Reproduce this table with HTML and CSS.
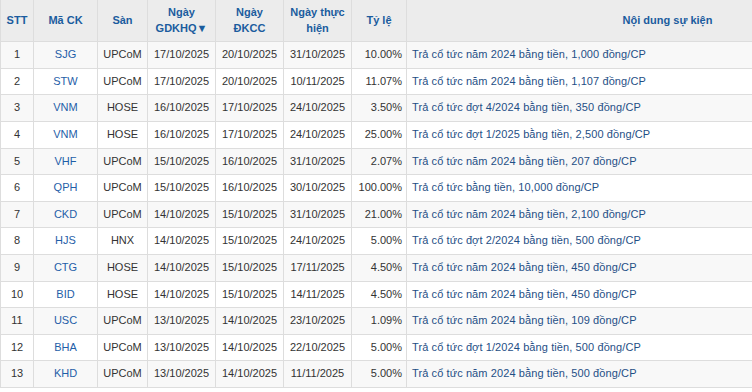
FILE: index.html
```html
<!DOCTYPE html>
<html lang="vi">
<head>
<meta charset="utf-8">
<title>Lịch sự kiện</title>
<link rel="stylesheet" href="styles.css">
</head>
<body>
<div class="wrap">
<table class="events">
  <colgroup>
    <col class="c-stt"><col class="c-ma"><col class="c-san"><col class="c-d1"><col class="c-d2"><col class="c-d3"><col class="c-tl"><col class="c-nd">
  </colgroup>
  <thead>
    <tr>
      <th>STT</th><th>Mã CK</th><th>Sàn</th><th>Ngày<br>GDKHQ<span class="arrow">▼</span></th><th>Ngày<br>ĐKCC</th><th>Ngày thực<br>hiện</th><th>Tỷ lệ</th><th>Nội dung sự kiện</th>
    </tr>
  </thead>
  <tbody>
    <tr><td>1</td><td class="code">SJG</td><td>UPCoM</td><td>17/10/2025</td><td>20/10/2025</td><td>31/10/2025</td><td class="num">10.00%</td><td class="desc">Trả cổ tức năm 2024 bằng tiền, 1,000 đồng/CP</td></tr>
    <tr><td>2</td><td class="code">STW</td><td>UPCoM</td><td>17/10/2025</td><td>20/10/2025</td><td>10/11/2025</td><td class="num">11.07%</td><td class="desc">Trả cổ tức năm 2024 bằng tiền, 1,107 đồng/CP</td></tr>
    <tr><td>3</td><td class="code">VNM</td><td>HOSE</td><td>16/10/2025</td><td>17/10/2025</td><td>24/10/2025</td><td class="num">3.50%</td><td class="desc">Trả cổ tức đợt 4/2024 bằng tiền, 350 đồng/CP</td></tr>
    <tr><td>4</td><td class="code">VNM</td><td>HOSE</td><td>16/10/2025</td><td>17/10/2025</td><td>24/10/2025</td><td class="num">25.00%</td><td class="desc">Trả cổ tức đợt 1/2025 bằng tiền, 2,500 đồng/CP</td></tr>
    <tr><td>5</td><td class="code">VHF</td><td>UPCoM</td><td>15/10/2025</td><td>16/10/2025</td><td>31/10/2025</td><td class="num">2.07%</td><td class="desc">Trả cổ tức năm 2024 bằng tiền, 207 đồng/CP</td></tr>
    <tr><td>6</td><td class="code">QPH</td><td>UPCoM</td><td>15/10/2025</td><td>16/10/2025</td><td>30/10/2025</td><td class="num">100.00%</td><td class="desc">Trả cổ tức bằng tiền, 10,000 đồng/CP</td></tr>
    <tr><td>7</td><td class="code">CKD</td><td>UPCoM</td><td>14/10/2025</td><td>15/10/2025</td><td>31/10/2025</td><td class="num">21.00%</td><td class="desc">Trả cổ tức năm 2024 bằng tiền, 2,100 đồng/CP</td></tr>
    <tr><td>8</td><td class="code">HJS</td><td>HNX</td><td>14/10/2025</td><td>15/10/2025</td><td>24/10/2025</td><td class="num">5.00%</td><td class="desc">Trả cổ tức đợt 2/2024 bằng tiền, 500 đồng/CP</td></tr>
    <tr><td>9</td><td class="code">CTG</td><td>HOSE</td><td>14/10/2025</td><td>15/10/2025</td><td>17/11/2025</td><td class="num">4.50%</td><td class="desc">Trả cổ tức năm 2024 bằng tiền, 450 đồng/CP</td></tr>
    <tr><td>10</td><td class="code">BID</td><td>HOSE</td><td>14/10/2025</td><td>15/10/2025</td><td>14/11/2025</td><td class="num">4.50%</td><td class="desc">Trả cổ tức năm 2024 bằng tiền, 450 đồng/CP</td></tr>
    <tr><td>11</td><td class="code">USC</td><td>UPCoM</td><td>13/10/2025</td><td>14/10/2025</td><td>23/10/2025</td><td class="num">1.09%</td><td class="desc">Trả cổ tức năm 2024 bằng tiền, 109 đồng/CP</td></tr>
    <tr><td>12</td><td class="code">BHA</td><td>UPCoM</td><td>13/10/2025</td><td>14/10/2025</td><td>22/10/2025</td><td class="num">5.00%</td><td class="desc">Trả cổ tức đợt 1/2024 bằng tiền, 500 đồng/CP</td></tr>
    <tr><td>13</td><td class="code">KHD</td><td>UPCoM</td><td>13/10/2025</td><td>14/10/2025</td><td>11/11/2025</td><td class="num">5.00%</td><td class="desc">Trả cổ tức năm 2024 bằng tiền, 500 đồng/CP</td></tr>
  </tbody>
</table>
</div>
</body>
</html>
```
FILE: styles.css
```css
html, body {
  margin: 0;
  padding: 0;
  background: #ffffff;
  overflow: hidden;
}
.wrap {
  width: 752px;
  overflow: hidden;
}
.events {
  border-collapse: collapse;
  table-layout: fixed;
  width: 928px;
  font-family: "Liberation Sans", Arial, sans-serif;
  font-size: 11px;
  color: #333333;
}
.c-stt { width: 33px; }
.c-ma { width: 64px; }
.c-san { width: 50px; }
.c-d1 { width: 68px; }
.c-d2 { width: 68px; }
.c-d3 { width: 68px; }
.c-tl { width: 55px; }
.c-nd { width: 522px; }
.events th,
.events td {
  border: 1px solid #dddddd;
  padding: 5px 3px;
  line-height: 15.6px;
  text-align: center;
  white-space: nowrap;
}
.events th {
  border-top: none;
  background: #ececec;
  color: #1b5c9e;
  font-weight: bold;
  padding: 5px 2px;
}
.arrow {
  font-size: 11px;
}
.events tbody tr:nth-child(odd) td {
  background: #f8f8f8;
}
.events tbody tr:nth-child(even) td {
  background: #ffffff;
}
.events td.code {
  color: #1f5ea8;
}
.events td.num {
  text-align: right;
  padding-right: 4px;
}
.events td.desc {
  text-align: left;
  color: #1f4f86;
  padding-left: 5px;
  letter-spacing: 0.1px;
}
```
